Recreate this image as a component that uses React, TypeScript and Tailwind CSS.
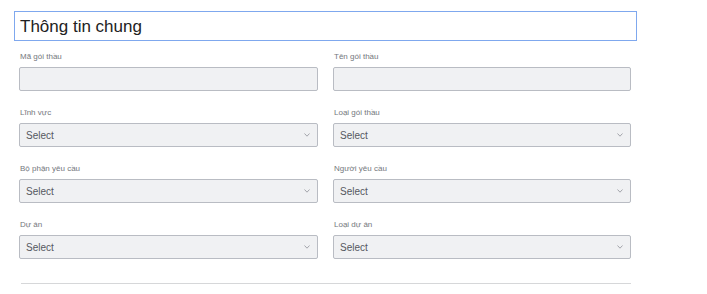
import React from 'react';

type Field = { label: string; kind: 'input' | 'select' };

const rows: [Field, Field][] = [
  [
    { label: 'Mã gói thầu', kind: 'input' },
    { label: 'Tên gói thầu', kind: 'input' },
  ],
  [
    { label: 'Lĩnh vực', kind: 'select' },
    { label: 'Loại gói thầu', kind: 'select' },
  ],
  [
    { label: 'Bộ phận yêu cầu', kind: 'select' },
    { label: 'Người yêu cầu', kind: 'select' },
  ],
  [
    { label: 'Dự án', kind: 'select' },
    { label: 'Loại dự án', kind: 'select' },
  ],
];

const Chevron = () => (
  <svg width="6" height="4" viewBox="0 0 6 4" fill="none" className="text-[#9a9da3]">
    <path d="M0.5 0.5 L3 3.2 L5.5 0.5" stroke="currentColor" strokeWidth="0.9" />
  </svg>
);

const FormField: React.FC<{ field: Field }> = ({ field }) => (
  <div className="flex flex-col">
    <label className="text-[8px] leading-[10px] text-[#74777d] mb-[5px] pl-[1px]">{field.label}</label>
    {field.kind === 'input' ? (
      <div className="h-[24px] bg-[#f0f1f3] border border-[#b9bcc3] rounded-[2px]" />
    ) : (
      <div className="h-[24px] bg-[#f0f1f3] border border-[#b9bcc3] rounded-[2px] flex items-center justify-between pl-[6px] pr-[7px]">
        <span className="text-[10px] text-[#555860]">Select</span>
        <Chevron />
      </div>
    )}
  </div>
);

export default function App() {
  return (
    <div
      className="w-[707px] h-[294px] bg-white pt-[11px] pl-[14px]"
      style={{ fontFamily: '"Liberation Sans", Arial, sans-serif' }}
    >
      <div className="w-[623px] h-[30px] border border-[#7fa8ee] flex items-center pl-[5px]">
        <h1 className="text-[17px] text-[#222] leading-none">Thông tin chung</h1>
      </div>

      <div className="ml-[5px] mt-[11px] w-[612px] grid grid-cols-[299px_298px] gap-x-[15px] gap-y-[17px]">
        {rows.map((pair, i) => (
          <React.Fragment key={i}>
            <FormField field={pair[0]} />
            <FormField field={pair[1]} />
          </React.Fragment>
        ))}
      </div>

      <div className="ml-[7px] mt-[24px] w-[610px] border-t border-[#d6d7d9]" />
    </div>
  );
}
